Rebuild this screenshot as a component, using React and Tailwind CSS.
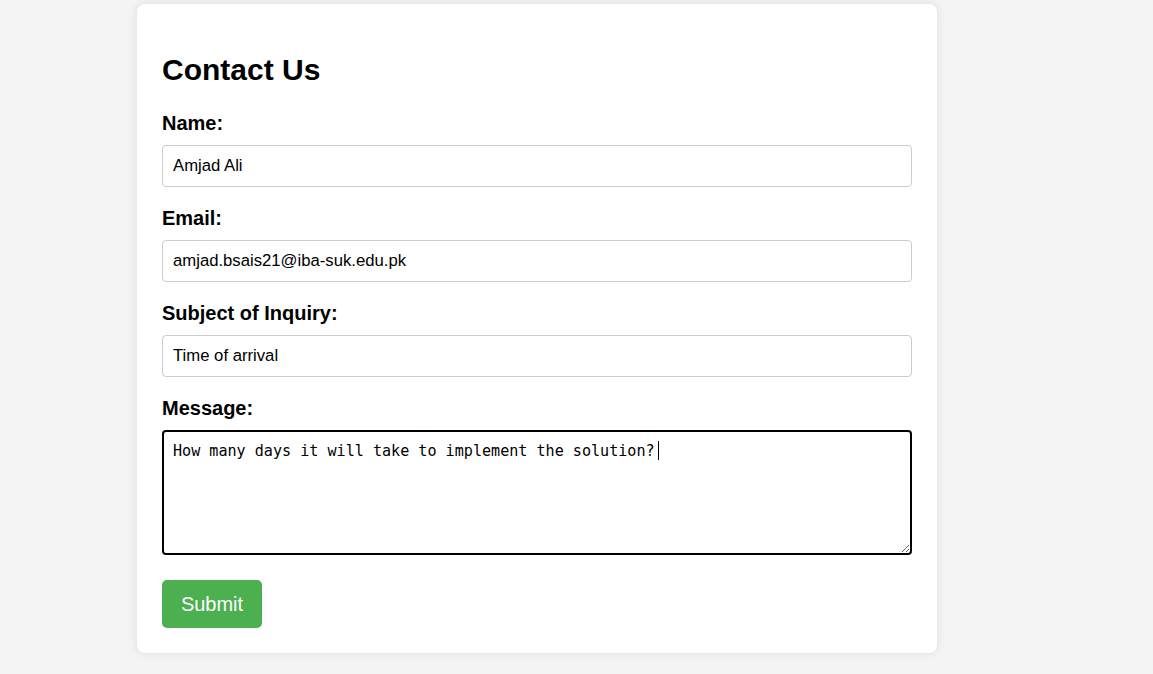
import React from "react";

const fields = [
  { label: "Name:", value: "Amjad Ali", type: "text" },
  { label: "Email:", value: "amjad.bsais21@iba-suk.edu.pk", type: "email" },
  { label: "Subject of Inquiry:", value: "Time of arrival", type: "text" },
];

export default function App() {
  return (
    <div className="min-h-screen bg-[#f4f4f4] pt-[4px] pl-[137px] font-['Liberation_Sans',Arial,sans-serif] text-black">
      {/* Card */}
      <div className="w-[800px] rounded-[8px] bg-white px-[25px] pt-[48px] pb-[25px] shadow-[0_0_10px_rgba(0,0,0,0.1)]">
        <h2 className="text-[30px] font-bold leading-[36px]">Contact Us</h2>

        <form onSubmit={(e) => e.preventDefault()}>
          {fields.map((f, i) => (
            <div key={i}>
              <label
                className={`mb-[10px] block text-[20px] font-bold leading-[24px] ${
                  i === 0 ? "mt-[23px]" : "mt-[19px]"
                }`}
              >
                {f.label}
              </label>
              <input
                type={f.type}
                defaultValue={f.value}
                className="block h-[42px] w-full rounded-[4px] border border-[#cccccc] px-[10px] text-[16.7px] outline-none"
              />
            </div>
          ))}

          {/* Message */}
          <label className="mt-[19px] mb-[10px] block text-[20px] font-bold leading-[24px]">
            Message:
          </label>
          <div className="relative">
            <textarea
              defaultValue="How many days it will take to implement the solution?"
              className="block h-[125px] w-full rounded-[4px] border-2 border-black px-[9px] pt-[10px] font-['DejaVu_Sans_Mono','Liberation_Mono',monospace] text-[15.1px] leading-[18px] outline-none"
            />
            <span className="absolute top-[11px] left-[496px] h-[19px] w-px bg-black" />
          </div>

          {/* Button */}
          <button
            type="submit"
            className="mt-[25px] h-[48px] w-[100px] rounded-[5px] bg-[#4caf50] text-[20px] text-white"
          >
            Submit
          </button>
        </form>
      </div>
    </div>
  );
}
